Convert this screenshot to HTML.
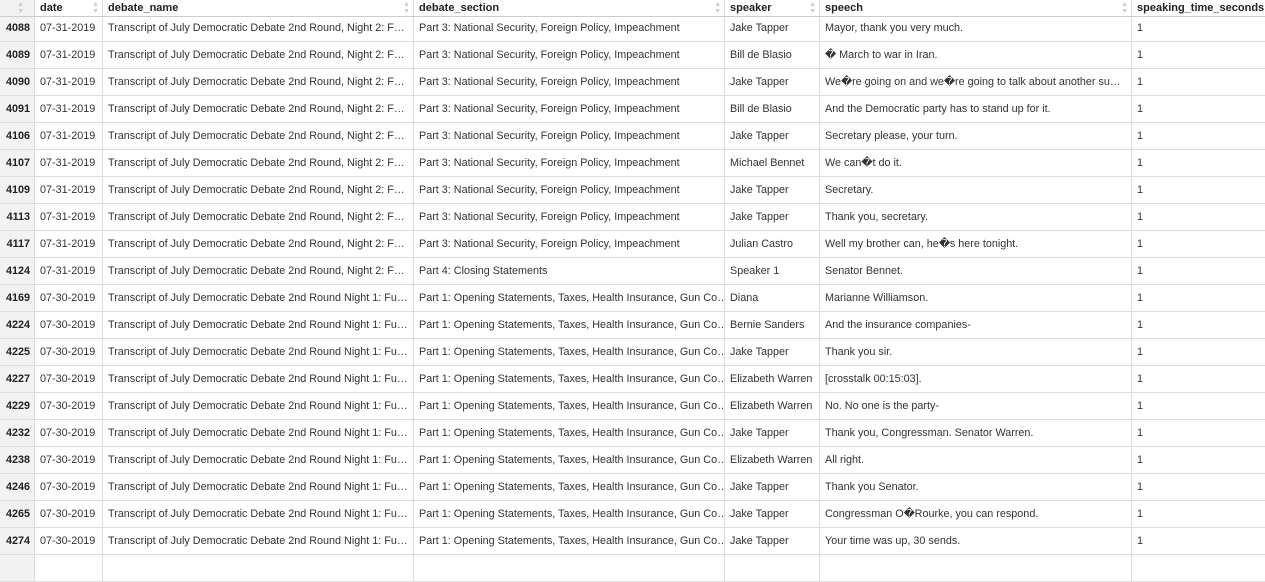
<!DOCTYPE html>
<html><head><meta charset="utf-8"><style>
body{margin:0;width:1265px;height:563px;overflow:hidden;background:#fff;font-family:"Liberation Sans",sans-serif;font-size:10.8px;color:#333;position:relative}
.r{position:absolute;left:0;width:1265px;height:27px;border-bottom:1px solid #ddd;box-sizing:border-box}
.c{position:absolute;top:0;height:26px;line-height:27px;padding-left:5px;box-sizing:border-box;border-right:1px solid #ddd;white-space:nowrap;overflow:hidden}
.n{left:0;width:35px;background:#f2f2f2;font-weight:bold;text-align:right;padding-right:4px;color:#222}
.h{position:absolute;top:0;left:0;width:1265px;height:17px;background:#fff;border-bottom:1px solid #ccc;box-sizing:border-box;z-index:2}
.h .c{height:16px;line-height:16px;font-weight:bold;color:#222;font-size:11px}
.s{position:absolute;right:3px;top:1px;color:#ccc;font-size:7px;line-height:7px;font-weight:normal}
</style></head><body>
<div class="h">
<div class="c n" style="background:#f2f2f2"><span class="s" style="right:10px">▲<br>▼</span></div>
<div class="c" style="left:35px;width:68px">date<span class="s">▲<br>▼</span></div>
<div class="c" style="left:103px;width:311px">debate_name<span class="s">▲<br>▼</span></div>
<div class="c" style="left:414px;width:311px">debate_section<span class="s">▲<br>▼</span></div>
<div class="c" style="left:725px;width:95px">speaker<span class="s">▲<br>▼</span></div>
<div class="c" style="left:820px;width:312px">speech<span class="s">▲<br>▼</span></div>
<div class="c" style="left:1132px;width:133px;border-right:none">speaking_time_seconds</div>
</div>
<div id="rows"></div>
<script>
var N2="Transcript of July Democratic Debate 2nd Round, Night 2: F…",N1="Transcript of July Democratic Debate 2nd Round Night 1: Fu…",
P3="Part 3: National Security, Foreign Policy, Impeachment",P1="Part 1: Opening Statements, Taxes, Health Insurance, Gun Co…",
d="�";
var R=[
["4088","07-31-2019",N2,P3,"Jake Tapper","Mayor, thank you very much."],
["4089","07-31-2019",N2,P3,"Bill de Blasio",d+" March to war in Iran."],
["4090","07-31-2019",N2,P3,"Jake Tapper","We"+d+"re going on and we"+d+"re going to talk about another su…"],
["4091","07-31-2019",N2,P3,"Bill de Blasio","And the Democratic party has to stand up for it."],
["4106","07-31-2019",N2,P3,"Jake Tapper","Secretary please, your turn."],
["4107","07-31-2019",N2,P3,"Michael Bennet","We can"+d+"t do it."],
["4109","07-31-2019",N2,P3,"Jake Tapper","Secretary."],
["4113","07-31-2019",N2,P3,"Jake Tapper","Thank you, secretary."],
["4117","07-31-2019",N2,P3,"Julian Castro","Well my brother can, he"+d+"s here tonight."],
["4124","07-31-2019",N2,"Part 4: Closing Statements","Speaker 1","Senator Bennet."],
["4169","07-30-2019",N1,P1,"Diana","Marianne Williamson."],
["4224","07-30-2019",N1,P1,"Bernie Sanders","And the insurance companies-"],
["4225","07-30-2019",N1,P1,"Jake Tapper","Thank you sir."],
["4227","07-30-2019",N1,P1,"Elizabeth Warren","[crosstalk 00:15:03]."],
["4229","07-30-2019",N1,P1,"Elizabeth Warren","No. No one is the party-"],
["4232","07-30-2019",N1,P1,"Jake Tapper","Thank you, Congressman. Senator Warren."],
["4238","07-30-2019",N1,P1,"Elizabeth Warren","All right."],
["4246","07-30-2019",N1,P1,"Jake Tapper","Thank you Senator."],
["4265","07-30-2019",N1,P1,"Jake Tapper","Congressman O"+d+"Rourke, you can respond."],
["4274","07-30-2019",N1,P1,"Jake Tapper","Your time was up, 30 sends."],
["","","","","",""]];
var L=[[35,68],[103,311],[414,311],[725,95],[820,312],[1132,133]],h="";
R.forEach(function(r,i){var t=15+i*27;h+='<div class="r" style="top:'+t+'px"><div class="c n">'+r[0]+'</div>';
for(var j=0;j<5;j++)h+='<div class="c" style="left:'+L[j][0]+'px;width:'+L[j][1]+'px">'+r[j+1]+'</div>';
h+='<div class="c" style="left:1132px;width:133px;border-right:none">'+(r[0]?"1":"")+'</div></div>';});
document.getElementById("rows").innerHTML=h;
</script>
</body></html>
